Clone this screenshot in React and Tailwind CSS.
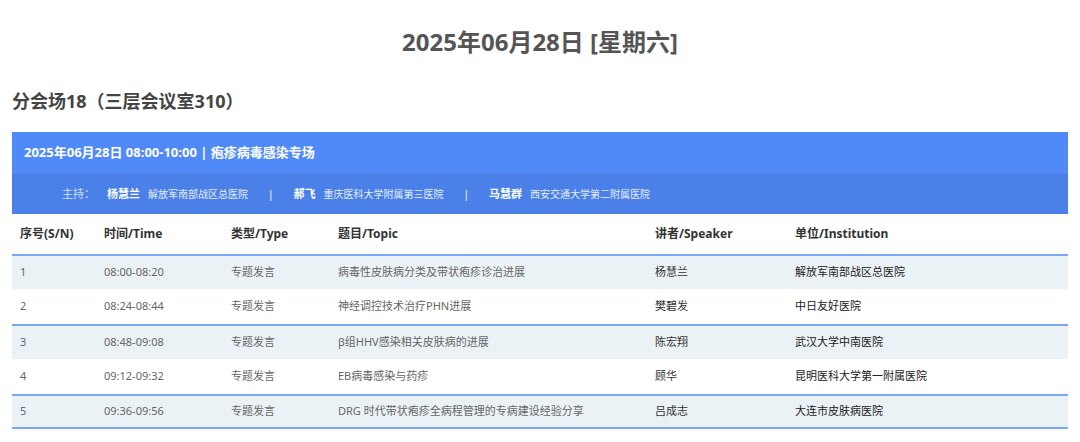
const rows = [
  ['1', '08:00-08:20', '专题发言', '病毒性皮肤病分类及带状疱疹诊治进展', '杨慧兰', '解放军南部战区总医院'],
  ['2', '08:24-08:44', '专题发言', '神经调控技术治疗PHN进展', '樊碧发', '中日友好医院'],
  ['3', '08:48-09:08', '专题发言', 'β组HHV感染相关皮肤病的进展', '陈宏翔', '武汉大学中南医院'],
  ['4', '09:12-09:32', '专题发言', 'EB病毒感染与药疹', '顾华', '昆明医科大学第一附属医院'],
  ['5', '09:36-09:56', '专题发言', 'DRG 时代带状疱疹全病程管理的专病建设经验分享', '吕成志', '大连市皮肤病医院'],
];

const cols = 'grid grid-cols-[84px_127px_107px_317px_140px_1fr] px-2 items-center';

export default function App() {
  return (
    <div className="w-[1080px] h-[442px] bg-white overflow-hidden" style={{ fontFamily: '"Noto Sans", "Noto Sans CJK SC", sans-serif' }}>
      <h1 className="pt-[24px] h-[62px] text-center text-[24px] font-bold text-[#555] leading-[36px]">2025年06月28日 [星期六]</h1>
      <h2 className="mt-[22px] px-3 text-[18px] font-bold text-[#444] leading-[34px]">分会场18（三层会议室310）</h2>
      <div className="mx-3 mt-[14px]">
        <div className="bg-[#4f8af8] h-[42px] flex items-center px-3 text-white text-[13px] font-bold">2025年06月28日 08:00-10:00 | 疱疹病毒感染专场</div>
        <div className="bg-[#4a80e8] h-[40px] flex items-center pl-[50px] text-white text-[10px] gap-0">
          <span className="text-[#cfe0ff] text-[11px]">主持：</span>
          <b className="ml-3 text-[11px]">杨慧兰</b><span className="ml-2 text-[#e6eeff]">解放军南部战区总医院</span>
          <span className="mx-5">|</span>
          <b className="text-[11px]">郝飞</b><span className="ml-2 text-[#e6eeff]">重庆医科大学附属第三医院</span>
          <span className="mx-5">|</span>
          <b className="text-[11px]">马慧群</b><span className="ml-2 text-[#e6eeff]">西安交通大学第二附属医院</span>
        </div>
        <div className={`${cols} h-[40px] text-[12px] font-bold text-[#333]`}>
          {['序号(S/N)', '时间/Time', '类型/Type', '题目/Topic', '讲者/Speaker', '单位/Institution'].map(h => <div key={h}>{h}</div>)}
        </div>
        {rows.map((r, i) => (
          <div key={i} className={`${cols} h-[35px] text-[11px] text-[#666] ${i % 2 === 0 ? 'bg-[#ebf2f6] border-t-2 border-[#7aa7f5]' : 'bg-white'} ${i === 4 ? 'border-b-2' : ''}`}>
            <div>{r[0]}</div><div>{r[1]}</div><div>{r[2]}</div><div>{r[3]}</div>
            <div className="text-[#333]">{r[4]}</div><div className="text-[#222]">{r[5]}</div>
          </div>
        ))}
      </div>
    </div>
  );
}
